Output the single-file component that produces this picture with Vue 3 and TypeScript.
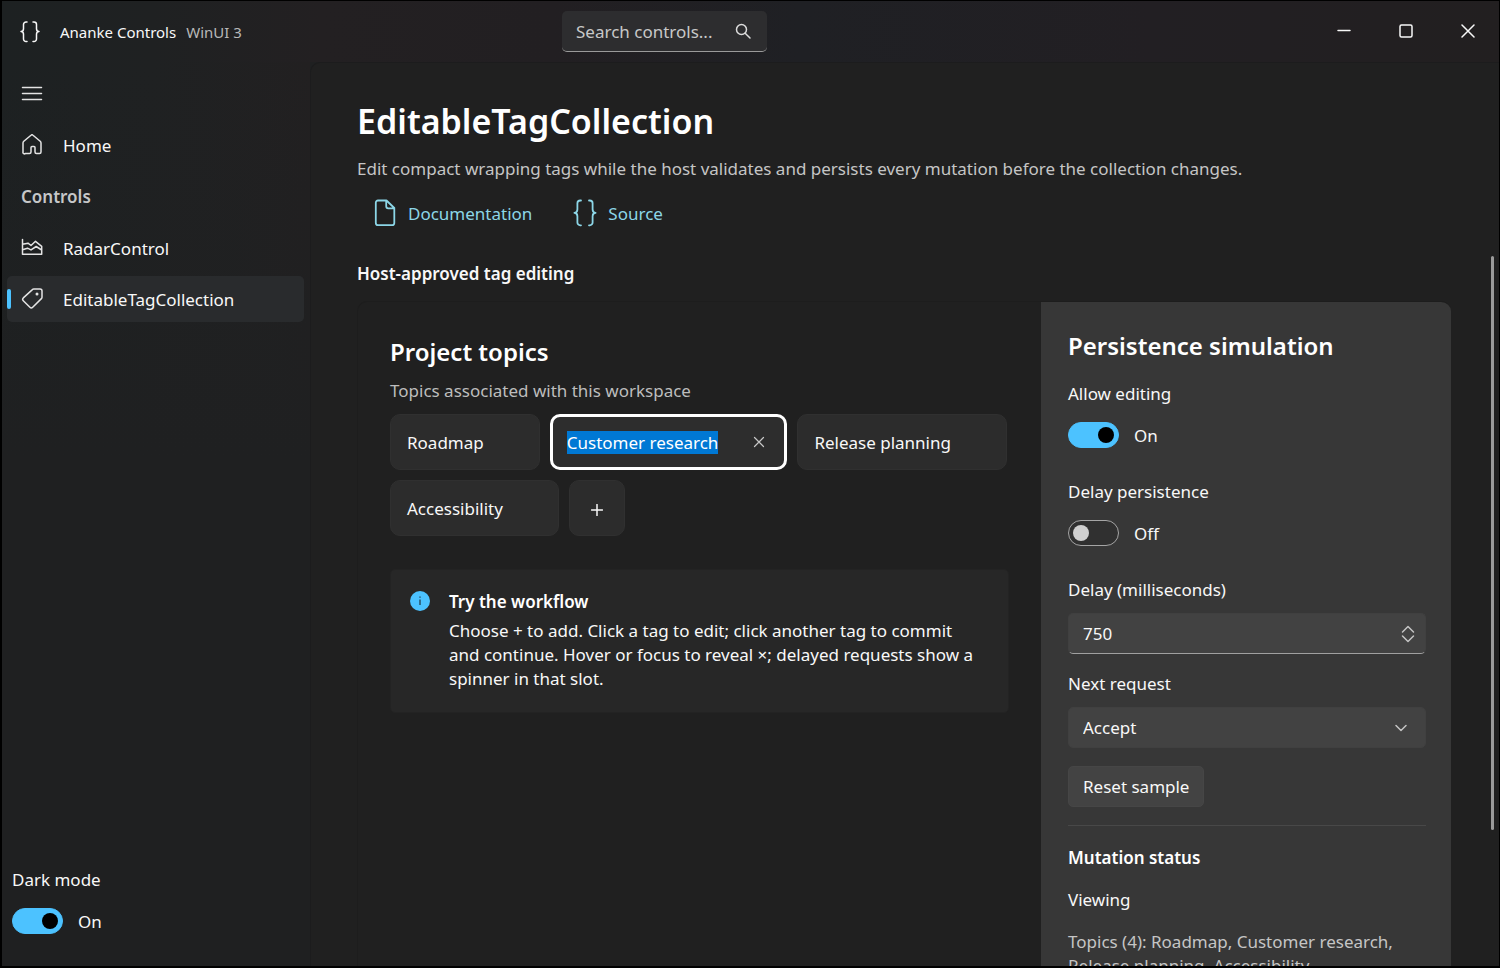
<script setup lang="ts">
import { computed, nextTick, onMounted, ref } from 'vue'

const initialTags = ['Roadmap', 'Customer research', 'Release planning', 'Accessibility']
const tags = ref<string[]>([...initialTags])
const editing = ref(1)
const allowEditing = ref(true)
const delayPersistence = ref(false)
const delay = ref('750')
const nextRequest = ref('Accept')
const darkMode = ref(true)
const search = ref('')
const tagList = ref<HTMLElement | null>(null)

const topicSummary = computed(() => `Topics (${tags.value.length}): ${tags.value.join(', ')}`)

async function edit(index: number) {
  if (!allowEditing.value) return
  editing.value = index
  await nextTick()
  const field = tagList.value?.querySelector('input')
  field?.focus()
  field?.select()
}

function add() {
  tags.value.push('New tag')
  edit(tags.value.length - 1)
}

function remove(index: number) {
  tags.value.splice(index, 1)
  editing.value = -1
}

function reset() {
  tags.value = [...initialTags]
  editing.value = -1
}

onMounted(() => edit(1))
</script>

<template>
  <div class="window">
    <header class="titlebar">
      <div class="brand">
        <svg class="brand-icon" viewBox="0 0 24 24" width="24" height="24">
          <path d="M9 2H8A2.500 2.500 0 0 0 5.500 4.500v4.200Q5.500 11.500 3 11.500q2.500 0 2.500 2.800V19A2.500 2.500 0 0 0 8 21.500h1M15 2h1A2.500 2.500 0 0 1 18.500 4.500v4.200Q18.500 11.500 21 11.500q-2.500 0-2.500 2.800V19a2.500 2.500 0 0 1-2.500 2.500h-1" />
        </svg>
        <span class="brand-name">Ananke Controls</span>
        <span class="brand-sub">WinUI 3</span>
      </div>
      <div class="search">
        <input v-model="search" type="text" aria-label="Search controls" placeholder="Search controls..." />
        <button type="button" aria-label="Search">
          <svg viewBox="0 0 16 16" width="16" height="16"><circle cx="6.500" cy="6.500" r="5" /><path d="m10.200 10.200 4.800 4.800" /></svg>
        </button>
      </div>
      <div class="caption">
        <button type="button" aria-label="Minimize"><svg viewBox="0 0 14 14" width="14" height="14"><path d="M1 6.500h12" /></svg></button>
        <button type="button" aria-label="Maximize"><svg viewBox="0 0 14 14" width="14" height="14"><rect x="1" y="1" width="12" height="12" rx="1.500" /></svg></button>
        <button type="button" aria-label="Close"><svg viewBox="0 0 14 14" width="14" height="14"><path d="m1 1 12 12M13 1 1 13" /></svg></button>
      </div>
    </header>

    <nav class="sidebar" aria-label="Main">
      <button class="nav-item" type="button" aria-label="Toggle navigation">
        <svg viewBox="0 0 22 22" width="22" height="22"><path d="M1.500 4.500h19M1.500 10.500h19M1.500 16.500h19" /></svg>
      </button>
      <a class="nav-item" href="#home">
        <svg viewBox="0 0 22 22" width="22" height="22"><path d="M2 9q0-1 .8-1.700L10 1.200q1-.9 2 0l7.200 6.100q.8.700.8 1.700v8.900a1.500 1.500 0 0 1-1.500 1.500h-3a1.500 1.500 0 0 1-1.500-1.500V13.500a1 1 0 0 0-1-1h-2a1 1 0 0 0-1 1v4.400a1.500 1.500 0 0 1-1.500 1.500h-4A1.500 1.500 0 0 1 2 17.900Z" /></svg>
        <span>Home</span>
      </a>
      <h2 class="nav-heading">Controls</h2>
      <a class="nav-item" href="#radar">
        <svg viewBox="0 0 22 22" width="22" height="22"><path d="M1.500 2.500v14.700h19.200V9.300l-6.200-5-4.500 4.200-3-2.300-5.500 1.100M1.500 12.700l5-1.500 3.500 1.700 5.200-3.400 5.500 3.500" /></svg>
        <span>RadarControl</span>
      </a>
      <a class="nav-item selected" href="#tags" aria-current="page">
        <svg viewBox="0 0 22 22" width="22" height="22"><path d="M12.800 1H19a2 2 0 0 1 2 2v6.200a2 2 0 0 1-.6 1.400l-8.700 8.700a2 2 0 0 1-2.800 0l-6.600-6.600a2 2 0 0 1 0-2.800l9.100-8.300a2 2 0 0 1 1.400-.6Z" /><circle class="dot" cx="16" cy="6" r="1.500" /></svg>
        <span>EditableTagCollection</span>
      </a>
      <div class="theme">
        <label for="dark">Dark mode</label>
        <div class="switch-row">
          <input id="dark" v-model="darkMode" class="switch" type="checkbox" role="switch" />
          <span>{{ darkMode ? 'On' : 'Off' }}</span>
        </div>
      </div>
    </nav>

    <main class="content">
      <h1>EditableTagCollection</h1>
      <p class="description">Edit compact wrapping tags while the host validates and persists every mutation before the collection changes.</p>
      <div class="links">
        <a href="#documentation">
          <svg viewBox="0 0 26 28" width="26" height="28"><path d="M6 1.500h8.500L22.300 9v15a2.200 2.200 0 0 1-2.200 2.200H6A2.200 2.200 0 0 1 3.800 24V3.700A2.200 2.200 0 0 1 6 1.500ZM14.200 1.700v5.600a2 2 0 0 0 2 2h6" /></svg>
          <span>Documentation</span>
        </a>
        <a href="#source">
          <svg viewBox="0 0 26 28" width="26" height="28"><path d="M9 1.500H8.200A2.800 2.800 0 0 0 5.400 4.300v6Q5.400 13.800 2.400 13.800q3 0 3 3.500v6.200a2.800 2.800 0 0 0 2.800 2.800H9M17 1.500h.8a2.800 2.800 0 0 1 2.800 2.800v6q0 3.500 3 3.500-3 0-3 3.500v6.200a2.800 2.800 0 0 1-2.800 2.800H17" /></svg>
          <span>Source</span>
        </a>
      </div>
      <h2 class="section-title">Host-approved tag editing</h2>

      <div class="card">
        <section class="sample">
          <h3>Project topics</h3>
          <p class="hint">Topics associated with this workspace</p>
          <div ref="tagList" class="tags">
            <template v-for="(tag, i) in tags" :key="i">
              <div v-if="i === editing" class="tag tag-editing">
                <input v-model="tags[i]" type="text" aria-label="Tag name" spellcheck="false" />
                <button type="button" aria-label="Remove tag" @click="remove(i)">
                  <svg viewBox="0 0 12 12" width="12" height="12"><path d="m1.500 1.500 9 9M10.500 1.500l-9 9" /></svg>
                </button>
              </div>
              <button v-else class="tag" type="button" @click="edit(i)">{{ tag }}</button>
            </template>
            <button class="tag tag-add" type="button" aria-label="Add tag" @click="add">
              <svg viewBox="0 0 12 12" width="12" height="12"><path d="M6 .5v11M.5 6h11" /></svg>
            </button>
          </div>
          <div class="info">
            <svg viewBox="0 0 20 20" width="20" height="20"><circle cx="10" cy="10" r="10" /><path d="M10 8.500V14M10 5.500v1.200" /></svg>
            <div>
              <h4>Try the workflow</h4>
              <p>Choose + to add. Click a tag to edit; click another tag to commit and continue. Hover or focus to reveal ×; delayed requests show a spinner in that slot.</p>
            </div>
          </div>
        </section>

        <section class="options">
          <h3>Persistence simulation</h3>
          <label for="allow">Allow editing</label>
          <div class="switch-row">
            <input id="allow" v-model="allowEditing" class="switch" type="checkbox" role="switch" />
            <span>{{ allowEditing ? 'On' : 'Off' }}</span>
          </div>
          <label for="delayed">Delay persistence</label>
          <div class="switch-row">
            <input id="delayed" v-model="delayPersistence" class="switch" type="checkbox" role="switch" />
            <span>{{ delayPersistence ? 'On' : 'Off' }}</span>
          </div>
          <label for="delay">Delay (milliseconds)</label>
          <div class="field number">
            <input id="delay" v-model="delay" type="text" inputmode="numeric" />
            <svg viewBox="0 0 14 18" width="14" height="18"><path d="m1.500 7 5.500-5.500L12.500 7M1.500 11l5.500 5.500 5.500-5.500" /></svg>
          </div>
          <label for="next">Next request</label>
          <div class="field select">
            <select id="next" v-model="nextRequest">
              <option>Accept</option>
              <option>Reject</option>
            </select>
            <svg viewBox="0 0 12 8" width="12" height="8"><path d="m1 1.500 5 5 5-5" /></svg>
          </div>
          <button class="reset" type="button" @click="reset">Reset sample</button>
          <hr />
          <h4>Mutation status</h4>
          <p class="status">Viewing</p>
          <p class="summary">{{ topicSummary }}</p>
        </section>
      </div>
    </main>
    <div class="scroll-thumb"></div>
  </div>
</template>

<style>
body {
  margin: 0;
  background: #000;
}
</style>

<style scoped>
* {
  box-sizing: border-box;
}

.window {
  position: relative;
  display: grid;
  grid-template: 61px minmax(0, 1fr) / 308px minmax(0, 1fr);
  height: 100vh;
  border: 1px solid #000;
  border-width: 1px 1px 2px 2px;
  background: #1f2021;
  color: #f8f8f8;
  font-family: 'Noto Sans', 'Open Sans', sans-serif;
  font-size: 17px;
  line-height: 24px;
  overflow: hidden;
}

h1, h2, h3, h4, p {
  margin: 0;
  font-weight: 600;
}

p {
  font-weight: 400;
}

h1, h3, h4 {
  color: #fff;
}

button, input, select {
  margin: 0;
  padding: 0;
  border: 0;
  background: none;
  color: inherit;
  font: inherit;
  outline: none;
}

a {
  color: inherit;
  text-decoration: none;
}

svg {
  flex: none;
  fill: none;
  stroke: currentColor;
  stroke-width: 1.5;
  stroke-linecap: round;
  stroke-linejoin: round;
}

.titlebar {
  grid-column: 1 / -1;
  display: grid;
  grid-template-columns: 560px 205px 1fr;
  align-items: center;
  background: linear-gradient(90deg, #1d2122 0, #1f2122 150px, #232022 320px, #221f22 550px, #1f2024 800px, #221f23 1150px, #221f20 1500px);
}

.brand {
  display: flex;
  align-items: center;
  padding-left: 16px;
  font-size: 15px;
}

.brand-name {
  margin: 0 10px 0 18px;
}

.brand-sub {
  color: #b8b8b8;
}

.search {
  display: flex;
  align-items: center;
  height: 41px;
  padding: 0 16px 0 14px;
  border-radius: 5px;
  border-bottom: 1px solid #9a9a9a;
  background: #2d2d2f;
}

.search input {
  flex: 1;
  min-width: 0;
  padding-top: 2px;
}

.search input::placeholder {
  color: #c8c8c8;
  opacity: 1;
}

.search button {
  display: flex;
  color: #dcdcdc;
}

.caption {
  display: flex;
  justify-content: flex-end;
  align-self: stretch;
}

.caption button {
  display: grid;
  place-items: center;
  width: 62px;
  padding-bottom: 2px;
}

.sidebar {
  display: flex;
  flex-direction: column;
  gap: 5px;
  padding: 9px 6px 32px 5px;
  background: linear-gradient(100deg, #1d2122 0, #1f2021 220px, #211f20 320px) no-repeat 0 0 / 100% 100%;
  background: linear-gradient(180deg, transparent 0, #1f2021 400px), linear-gradient(90deg, #1d2122 0, #1f2122 150px, #222021 308px);
}

.nav-item {
  position: relative;
  display: flex;
  align-items: center;
  gap: 20px;
  height: 46px;
  padding: 0 14px;
  border-radius: 5px;
}

.nav-item span {
  padding-top: 2px;
}

.nav-item svg {
  color: #e4e4e4;
}

.nav-item.selected {
  background: #292b2d;
}

.nav-item.selected::before {
  content: '';
  position: absolute;
  left: 0;
  top: 13px;
  width: 4px;
  height: 20px;
  border-radius: 2px;
  background: #4cc2ff;
}

.dot {
  fill: currentColor;
  stroke: none;
}

.nav-heading {
  padding: 1px 0 0 14px;
  color: #c6c7c8;
  font-size: 17px;
  line-height: 46px;
}

.theme {
  display: grid;
  gap: 16px;
  margin-top: auto;
  padding-left: 5px;
}

.switch-row {
  display: flex;
  align-items: center;
  gap: 15px;
  height: 26px;
}

.switch-row span {
  padding-top: 2px;
}

.switch {
  appearance: none;
  display: flex;
  align-items: center;
  width: 51px;
  height: 26px;
  padding: 0 4px;
  border: 1px solid #a5a5a5;
  border-radius: 13px;
  background: #303030;
}

.switch::before {
  content: '';
  width: 16px;
  height: 16px;
  border-radius: 50%;
  background: #cfcfcf;
}

.switch:checked {
  justify-content: flex-end;
  border-color: #4cc2ff;
  background: #4cc2ff;
}

.switch:checked::before {
  background: #000;
}

.content {
  padding: 34px 48px 0 46px;
  border: 1px solid #1c1c1d;
  border-width: 1px 0 0 1px;
  border-radius: 10px 0 0 0;
  background: #202020;
  overflow: hidden;
}

h1 {
  font-size: 34px;
  line-height: 48px;
}

.description {
  margin-top: 12px;
  color: #c5c5c5;
}

.links {
  display: flex;
  gap: 40px;
  margin-top: 18px;
  padding-left: 15px;
  color: #8cd6e7;
}

.links a {
  display: flex;
  align-items: center;
  gap: 10px;
  height: 28px;
}

.links span {
  padding-top: 2px;
}

.links svg {
  stroke-width: 1.8;
}

.section-title {
  margin-top: 35px;
  font-size: 17px;
}

.card {
  display: grid;
  grid-template-columns: minmax(0, 1fr) 410px;
  min-height: 720px;
  margin-top: 15px;
  border: 1px solid #1d1d1d;
  border-width: 1px 0 0 1px;
  border-radius: 10px;
  overflow: hidden;
}

h3 {
  font-size: 24px;
  line-height: 34px;
}

.sample {
  padding: 33px 32px;
}

.hint {
  margin-top: 10px;
  color: #bdbdbd;
}

.tags {
  display: flex;
  flex-wrap: wrap;
  gap: 10px;
  margin-top: 11px;
}

.tag {
  height: 56px;
  padding: 2px 55px 0 16px;
  border: 1px solid #303030;
  border-radius: 10px;
  background: #2c2c2c;
}

.tag-editing {
  display: flex;
  align-items: center;
  gap: 35px;
  padding: 0 19px 0 14px;
  border: 3px solid #fff;
  background: #2d2d2d;
}

.tag-editing input {
  field-sizing: content;
  height: 25px;
}

.tag-editing input::selection {
  background: #0078d4;
  color: #fff;
}

.tag-editing button {
  display: flex;
  color: #c8c8c8;
}

.tag-editing svg {
  stroke-width: 1.2;
}

.tag-add {
  display: grid;
  place-items: center;
  width: 56px;
  padding: 4px 0 0;
}

.info {
  display: flex;
  gap: 19px;
  margin-top: 33px;
  padding: 20px 32px 21px 19px;
  border: 1px solid #232323;
  border-radius: 5px;
  background: #272727;
}

.info svg {
  margin-top: 1px;
  color: #1d3440;
  stroke-width: 1.2;
  stroke-linecap: butt;
}

.info circle {
  fill: #4cc2ff;
  stroke: none;
}

.info h4 {
  margin-bottom: 5px;
}

.options {
  display: flex;
  flex-direction: column;
  padding: 27px 25px 0 27px;
  background: #373737;
}

.options h3 {
  margin-bottom: 1px;
}

.options label {
  margin-top: 18px;
}

.options .switch-row {
  margin-top: 16px;
}

.options .switch-row + label {
  margin-top: 32px;
}

.field {
  display: grid;
  align-items: center;
  height: 41px;
  margin-top: 11px;
  border: 1px solid #404040;
  border-radius: 5px;
  background: #424242;
}

.field > * {
  grid-area: 1 / 1;
}

.field input,
.field select {
  appearance: none;
  width: 100%;
  height: 39px;
  padding: 0 14px;
}

.field svg {
  justify-self: end;
  margin-right: 10px;
  color: #c4c4c4;
  pointer-events: none;
}

.field.number {
  border-bottom-color: #a0a0a0;
}

.field.select svg {
  margin-right: 18px;
}

.reset {
  align-self: flex-start;
  height: 41px;
  margin-top: 18px;
  padding: 0 14px;
  border: 1px solid #464646;
  border-radius: 5px;
  background: #434343;
}

hr {
  width: 100%;
  margin: 18px 0 20px;
  border: 0;
  border-top: 1px solid #484848;
}

.status,
.summary {
  margin-top: 18px;
}

.summary {
  color: #c5c5c5;
}

.scroll-thumb {
  position: absolute;
  top: 255px;
  right: 5px;
  bottom: 136px;
  width: 3px;
  border-radius: 2px;
  background: #9b9b9b;
}
</style>
